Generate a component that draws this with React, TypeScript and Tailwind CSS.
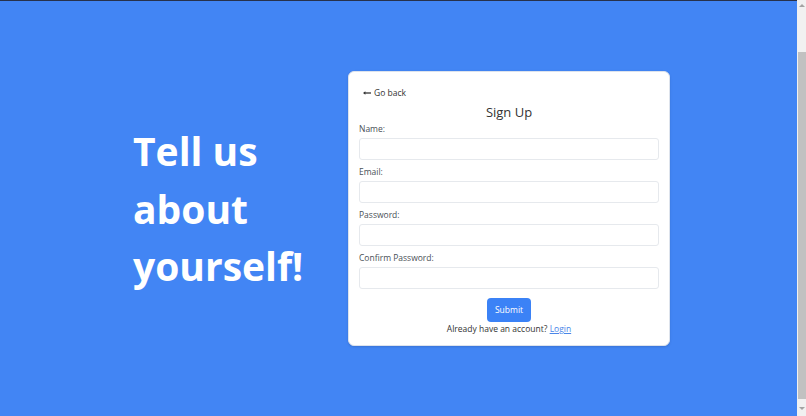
import { useState } from "react";

function Field({ label, type = "text" }: { label: string; type?: string }) {
  const [value, setValue] = useState("");
  return (
    <div className="flex flex-col">
      <label className="text-[8.5px] leading-[13px] text-[#495057]">{label}</label>
      <input
        type={type}
        value={value}
        onChange={(e) => setValue(e.target.value)}
        className="mt-[3px] h-[22px] w-full rounded-[3px] border border-[#e6e9ed] bg-white px-[6px] text-[8.5px] text-[#495057] outline-none"
      />
    </div>
  );
}

function Scrollbar() {
  return (
    <div className="flex h-full w-[9px] shrink-0 flex-col items-center bg-[#f1f1f1]">
      <div className="mt-[4px] h-0 w-0 border-x-[3px] border-b-[3px] border-x-transparent border-b-[#a3a3a3]" />
      <div className="mt-[45px] h-[347px] w-[8px] bg-[#c1c1c1]" />
      <div className="mt-[8px] h-0 w-0 border-x-[3px] border-t-[3px] border-x-transparent border-t-[#a3a3a3]" />
    </div>
  );
}

export default function App() {
  return (
    <div
      className="flex h-screen overflow-hidden"
      style={{ fontFamily: '"Open Sans", "Noto Sans", sans-serif' }}
    >
      <div className="flex min-w-0 flex-1 flex-col">
        {/* bottom edge of the navbar, scrolled out of view */}
        <div className="h-px bg-[#27314a]" />

        <main className="flex flex-1 items-center justify-center bg-[#4285f4] pl-[6px]">
          <div className="w-[215px] shrink-0">
            <h1 className="text-[39px] font-bold leading-[1.48] text-white">
              Tell us
              <br />
              about
              <br />
              yourself!
            </h1>
          </div>

          <div className="w-[322px] shrink-0 rounded-[6px] border border-[#dde3ec] bg-white px-[10px] pb-[10px] pt-[14px] shadow-sm">
            <button className="flex items-center gap-[3px] pl-[4px] text-[8.5px] leading-[13px] text-[#333]">
              <svg width="8" height="6" viewBox="0 0 8 6" className="mt-[1px]">
                <path d="M8 3H1.2" stroke="#333" strokeWidth="1.3" />
                <path d="M0 3L2.4 1.2V4.8Z" fill="#333" />
              </svg>
              Go back
            </button>

            <h2 className="mt-[3px] text-center text-[13px] leading-[20px] text-[#333]">Sign Up</h2>

            <form className="flex flex-col gap-[5px]" onSubmit={(e) => e.preventDefault()}>
              <Field label="Name:" />
              <Field label="Email:" type="email" />
              <Field label="Password:" type="password" />
              <Field label="Confirm Password:" type="password" />

              <div className="mt-[4px] flex justify-center">
                <button
                  type="submit"
                  className="h-[24px] w-[44px] rounded-[4px] bg-[#3b82f6] text-[8.5px] text-white"
                >
                  Submit
                </button>
              </div>
            </form>

            <p className="text-center text-[8.5px] leading-[13px] text-[#333]">
              Already have an account?{" "}
              <a href="#" className="text-[#4a86e8] underline">
                Login
              </a>
            </p>
          </div>
        </main>
      </div>

      <Scrollbar />
    </div>
  );
}
